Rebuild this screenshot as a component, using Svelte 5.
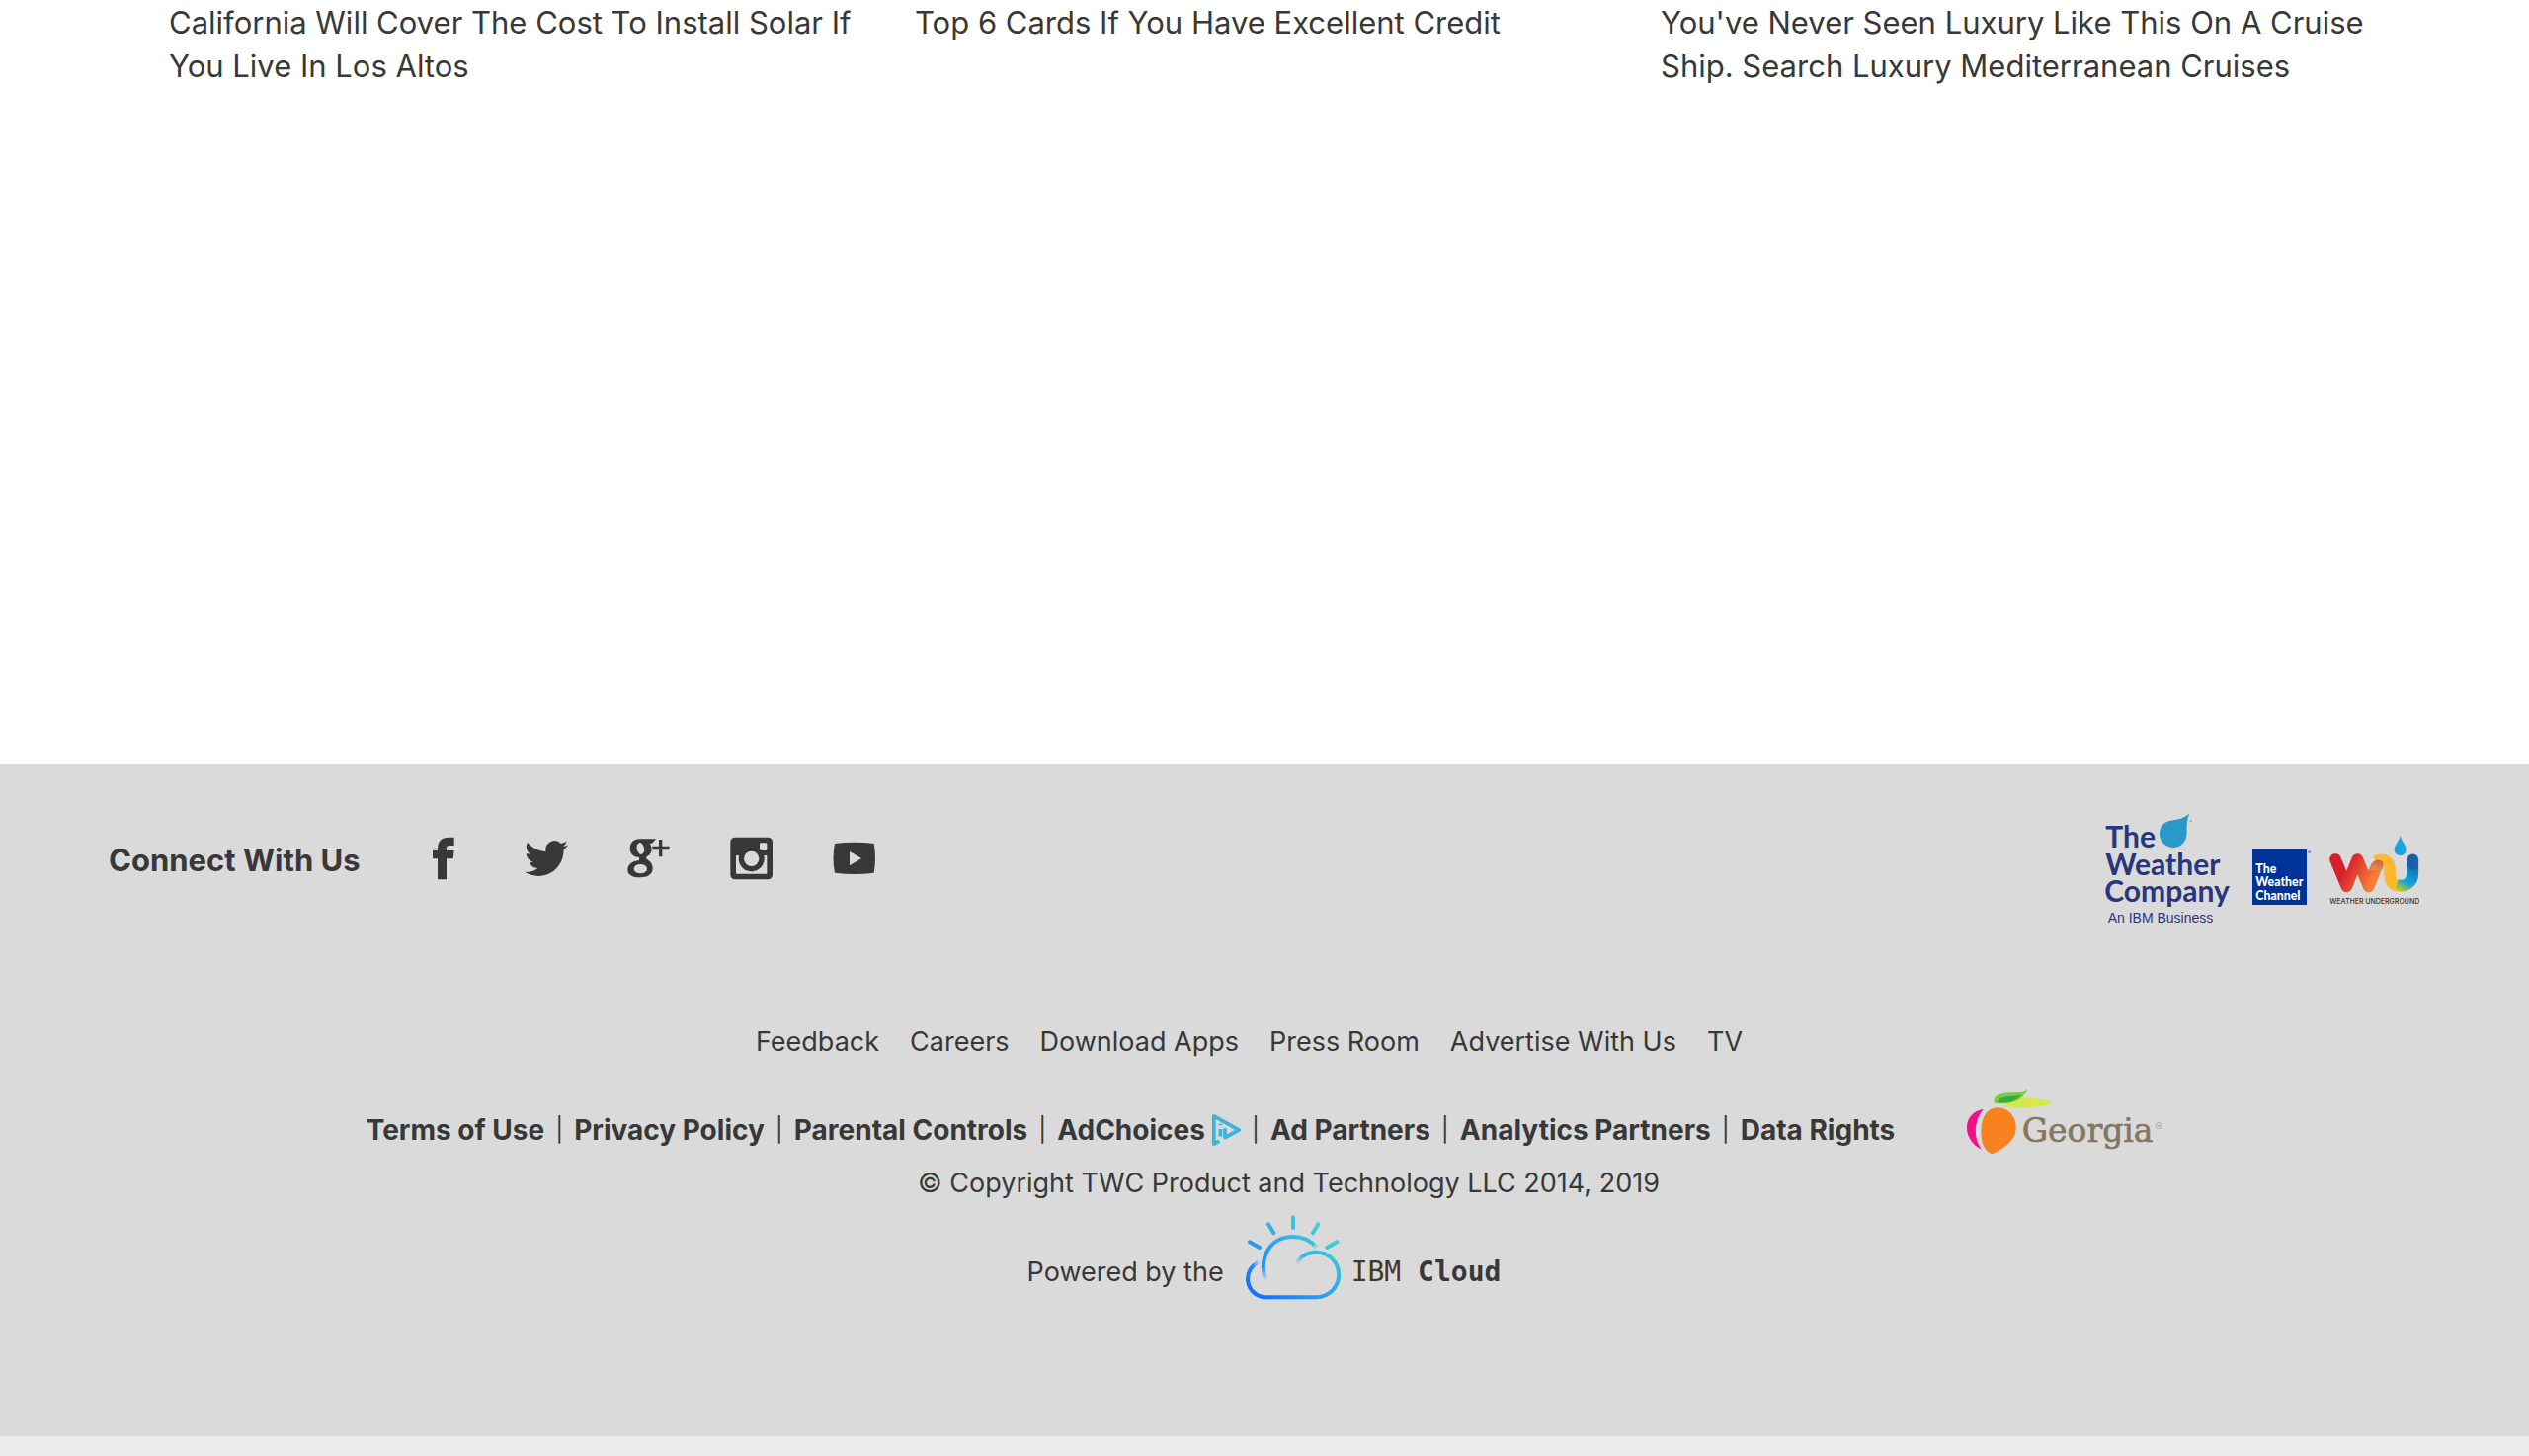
<script>
  const promos = [
    'California Will Cover The Cost To Install Solar If You Live In Los Altos',
    'Top 6 Cards If You Have Excellent Credit',
    "You've Never Seen Luxury Like This On A Cruise Ship. Search Luxury Mediterranean Cruises"
  ];
  const links = ['Feedback', 'Careers', 'Download Apps', 'Press Room', 'Advertise With Us', 'TV'];
  const legal = [
    'Terms of Use',
    'Privacy Policy',
    'Parental Controls',
    'AdChoices',
    'Ad Partners',
    'Analytics Partners',
    'Data Rights'
  ];
</script>

<main class="promos">
  {#each promos as promo}
    <a class="promo" href="#promo">{promo}</a>
  {/each}
</main>

<footer>
  <div class="top">
    <div class="social">
      <h2>Connect With Us</h2>
      <a href="#facebook" aria-label="Facebook">
        <svg viewBox="981 80 132 132"><path d="M1079 82H1064Q1029 82 1029 116V122H1014V147H1029V210H1056V147H1076L1079 122H1056V114Q1056 107 1064 107H1079Z" /></svg>
      </a>
      <a href="#twitter" aria-label="Twitter">
        <svg viewBox="0 0 24 24"><path d="M23.954 4.569a10 10 0 0 1-2.825.775 4.958 4.958 0 0 0 2.163-2.723c-.951.555-2.005.959-3.127 1.184a4.92 4.92 0 0 0-8.384 4.482C7.691 8.094 4.066 6.13 1.64 3.161a4.822 4.822 0 0 0-.666 2.475c0 1.71.87 3.213 2.188 4.096a4.904 4.904 0 0 1-2.228-.616v.061a4.923 4.923 0 0 0 3.946 4.827 4.996 4.996 0 0 1-2.212.085 4.937 4.937 0 0 0 4.604 3.417 9.868 9.868 0 0 1-6.102 2.105c-.39 0-.779-.023-1.17-.067a13.995 13.995 0 0 0 7.557 2.209c9.054 0 13.999-7.496 13.999-13.986 0-.209 0-.42-.015-.63a9.936 9.936 0 0 0 2.46-2.548z" /></svg>
      </a>
      <a href="#google" aria-label="Google Plus">
        <svg viewBox="225 80 132 132">
          <path d="M262 87H312L300 100H293Q299 107 299 118C299 130 291 137 284 141Q280 144 284 148C296 155 302 164 302 177C302 194 288 204 264 204C240 204 226 195 226 181C226 165 240 154 261 152V143C243 142 233 131 233 116C233 98 245 87 262 87Z" />
          <path d="M301 109H321V89H331V109H353V120H331V141H321V120H301Z" />
          <ellipse class="cut" cx="265" cy="116" rx="11" ry="18" transform="rotate(-12 265 116)" />
          <ellipse class="cut" cx="265" cy="178" rx="20" ry="14" />
        </svg>
      </a>
      <a href="#instagram" aria-label="Instagram">
        <svg viewBox="537 80 132 132">
          <rect x="538" y="82" width="128" height="128" rx="14" />
          <rect class="cut" x="627" y="99" width="22" height="23" rx="4" />
          <rect class="cut" x="555" y="137" width="94" height="56" rx="2" />
          <circle cx="602" cy="147" r="39" />
          <circle class="cut" cx="602" cy="147" r="23" />
        </svg>
      </a>
      <a href="#youtube" aria-label="YouTube">
        <svg viewBox="849 80 132 132">
          <path d="M855 101Q915 93 974 101Q982 146 974 190Q915 198 855 190Q846 146 855 101Z" />
          <path class="cut" d="M900 125L936 146L900 168Z" />
        </svg>
      </a>
    </div>

    <div class="brands">
      <a class="company" href="#company" aria-label="The Weather Company">
        <svg viewBox="93 72 381 339">
          <g class="navy lato" font-size="90" font-weight="700">
            <text x="94" y="178">The</text>
            <text x="94" y="260">Weather</text>
            <text x="91" y="343">Company</text>
          </g>
          <text class="navy plain" x="101" y="406" font-size="42">An IBM Business</text>
          <path fill="#2a98cb" d="M349 73C341 91 341 108 341 130C341 160 324 177 300 177C276 177 258 159 258 136C258 113 272 97 300 94C323 91 335 86 349 73Z" />
          <circle cx="353" cy="97" r="3" fill="#999" />
        </svg>
      </a>
      <a class="channel" href="#channel" aria-label="The Weather Channel">
        <svg viewBox="541 179 180 168">
          <rect x="541" y="179" width="165" height="168" fill="#003399" />
          <g class="white lato" font-size="37" font-weight="900">
            <text x="551" y="251">The</text>
            <text x="551" y="291">Weather</text>
            <text x="551" y="331">Channel</text>
          </g>
          <circle cx="714" cy="187" r="4" fill="#7588b8" />
        </svg>
      </a>
      <a class="wu" href="#wunderground" aria-label="Weather Underground">
        <svg viewBox="774 135 273 213">
          <defs>
            <linearGradient id="wu-red" gradientUnits="userSpaceOnUse" x1="800" y1="200" x2="930" y2="270">
              <stop offset="0.25" stop-color="#d8202b" />
              <stop offset="0.85" stop-color="#f57b38" />
            </linearGradient>
            <linearGradient id="wu-blue" gradientUnits="userSpaceOnUse" x1="1027" y1="200" x2="980" y2="305">
              <stop offset="0.1" stop-color="#1660ae" />
              <stop offset="0.7" stop-color="#12a3dc" />
              <stop offset="0.9" stop-color="#8cc63f" />
              <stop offset="1" stop-color="#fdb82f" />
            </linearGradient>
            <linearGradient id="wu-fold" gradientUnits="userSpaceOnUse" x1="925" y1="205" x2="912" y2="250">
              <stop offset="0" stop-color="#b96038" />
              <stop offset="1" stop-color="#f79256" />
            </linearGradient>
          </defs>
          <g fill="none" stroke-width="35" stroke-linecap="round" stroke-linejoin="round">
            <path stroke="url(#wu-red)" d="M792 210L826 292L859 210L893 292L917 232" />
            <path stroke="#fdb82f" stroke-linecap="butt" d="M914 216C940 203 956 216 957 240V256C958 280 970 291 994 291" />
            <path stroke="url(#wu-blue)" stroke-linecap="butt" d="M978 287C1005 296 1027 280 1027 252V225" />
            <path stroke="#1660ae" d="M1027 211V225" />
          </g>
          <path fill="url(#wu-fold)" d="M905 221Q918 203 937 218Q940 232 934 243H898Z" />
          <path fill="#1ba5dc" d="M989 137C993 157 1007 165 1007 181A18 18 0 0 1 971 181C971 165 985 157 989 137Z" />
          <text class="inter" x="775" y="345" font-size="21" font-weight="500" fill="#333">WEATHER UNDERGROUND</text>
        </svg>
      </a>
    </div>
  </div>

  <nav class="links">
    {#each links as link}
      <a href="#link">{link}</a>
    {/each}
  </nav>

  <div class="legal">
    <div class="terms">
      {#each legal as item, i}
        {#if i > 0}<span class="bar">|</span>{/if}
        <a href="#legal">{item}{#if item === 'AdChoices'}<svg viewBox="0 0 32 34"><path d="M9 29L3 32V2L30 17L15 25V15" /><path d="M10 10V12M10 16V24" /></svg>{/if}</a>
      {/each}
    </div>
    <a class="georgia" href="#georgia" aria-label="Georgia">
      <svg viewBox="36 36 597 201">
        <path fill="#f5108a" d="M86 98C22 110 18 188 80 221C52 180 60 132 86 98Z" />
        <path fill="#f98220" d="M128 94C165 94 188 124 185 160C182 198 142 222 112 235C92 228 78 205 79 165C80 122 98 94 128 94Z" />
        <path fill="#d6e84c" d="M145 90C190 56 230 62 302 77C262 94 190 100 145 90Z" />
        <path fill="#7ccb3f" d="M120 80C110 52 150 50 180 48Q205 46 219 38C210 70 170 88 120 80Z" />
        <path fill="#36aa48" d="M128 78C135 58 165 62 202 56C185 74 160 84 128 78Z" />
        <text x="203" y="198" font-size="99" font-family="'DejaVu Serif', serif" fill="#857661" stroke="#857661" stroke-width="2">Georgia</text>
        <circle cx="619" cy="149" r="9" fill="none" stroke="#b5aca0" stroke-width="3" />
        <circle cx="619" cy="149" r="3" fill="#a0958a" />
      </svg>
    </a>
  </div>

  <p class="copyright">© Copyright TWC Product and Technology LLC 2014, 2019</p>

  <a class="powered" href="#cloud">
    <span>Powered by the</span>
    <svg viewBox="726 60 288 258">
      <defs>
        <linearGradient id="sky" gradientUnits="userSpaceOnUse" x1="770" y1="310" x2="960" y2="90">
          <stop offset="0" stop-color="#1570ff" />
          <stop offset="0.5" stop-color="#2ea5ee" />
          <stop offset="1" stop-color="#42d4d4" />
        </linearGradient>
        <radialGradient id="fade">
          <stop offset="0.1" stop-color="#000" />
          <stop offset="1" stop-color="#000" stop-opacity="0" />
        </radialGradient>
        <mask id="sun-mask" maskUnits="userSpaceOnUse" x="700" y="40" width="340" height="300">
          <rect x="700" y="40" width="340" height="300" fill="#fff" />
          <circle cx="790" cy="264" r="48" fill="url(#fade)" />
          <circle cx="944" cy="161" r="20" fill="url(#fade)" />
        </mask>
        <mask id="cloud-mask" maskUnits="userSpaceOnUse" x="700" y="40" width="340" height="300">
          <rect x="700" y="40" width="340" height="300" fill="#fff" />
          <circle cx="877" cy="213" r="40" fill="url(#fade)" />
          <circle cx="770" cy="200" r="28" fill="url(#fade)" />
        </mask>
      </defs>
      <g fill="none" stroke="url(#sky)" stroke-width="12">
        <g stroke-linecap="round">
          <path d="M870.1 67L870 99M795 88L811 115M946 88L930 115M738 142L768 159M1003 142L973 159" />
        </g>
        <path mask="url(#sun-mask)" d="M788 262C762 190 800 126 870 126C900 126 924 138 942 159" />
        <path mask="url(#cloud-mask)" d="M878 212C890 186 914 173 940 173A68 68 0 0 1 940 310H788A56 56 0 0 1 770 201" />
      </g>
    </svg>
    <span class="ibm">IBM <b>Cloud</b></span>
  </a>
</footer>

<style>
  :global(body) {
    margin: 0;
    background: #ececec;
  }
  :global(#app) {
    font-family: Inter, 'Liberation Sans', sans-serif;
    color: #383838;
  }
  a {
    color: inherit;
    text-decoration: none;
  }
  svg {
    display: block;
  }
  .promos {
    display: grid;
    grid-template-columns: repeat(3, 1fr);
    padding: 1px 124px 684px 171px;
    background: #fff;
  }
  .promo {
    padding-right: 32px;
    font-size: 31px;
    line-height: 44px;
  }
  footer {
    padding: 50px 111px 138px 110px;
    background: #dadada;
    font-size: 27px;
    line-height: 40px;
  }
  .top {
    display: flex;
    justify-content: space-between;
    align-items: flex-start;
  }
  .social {
    display: flex;
    align-items: center;
    gap: 60px;
    padding-top: 22px;
  }
  .social h2 {
    margin: 0;
    padding: 4px 2px 0 0;
    font-size: 31px;
    font-weight: 700;
    line-height: 44px;
  }
  .social svg {
    width: 44px;
    height: 44px;
    fill: #383838;
  }
  .social .cut {
    fill: #dadada;
  }
  .brands {
    display: flex;
    align-items: flex-end;
  }
  .company svg {
    width: 127px;
    height: 113px;
  }
  .channel svg {
    width: 60px;
    height: 56px;
  }
  .wu svg {
    width: 91px;
    height: 71px;
  }
  .channel {
    margin: 0 18px 20px 22px;
  }
  .wu {
    margin-bottom: 20px;
  }
  .navy {
    fill: #28367e;
  }
  .white {
    fill: #fff;
  }
  .lato {
    font-family: Lato, sans-serif;
  }
  .plain {
    font-family: 'Liberation Sans', sans-serif;
  }
  .inter {
    font-family: Inter, sans-serif;
  }
  .links {
    display: flex;
    justify-content: center;
    gap: 31px;
    margin-top: 99px;
    padding-right: 30px;
  }
  .legal {
    display: flex;
    justify-content: center;
    align-items: center;
    gap: 73px;
    margin-top: 27px;
    padding-left: 2px;
  }
  .terms {
    display: flex;
    gap: 11px;
    padding-top: 16px;
    font-size: 28px;
    font-weight: 700;
  }
  .terms a {
    display: flex;
    align-items: center;
    gap: 6px;
  }
  .bar {
    font-size: 24px;
    font-weight: 400;
  }
  .terms svg {
    width: 30px;
    height: 32px;
    fill: none;
    stroke: #3fb3d6;
    stroke-width: 4;
    stroke-linejoin: round;
  }
  .georgia svg {
    width: 199px;
    height: 67px;
  }
  .copyright {
    margin: 9px 0 0;
    padding-left: 50px;
    text-align: center;
  }
  .powered {
    display: flex;
    justify-content: center;
    align-items: flex-end;
    margin-top: 12px;
  }
  .powered span {
    margin-bottom: 8px;
  }
  .powered svg {
    width: 96px;
    height: 86px;
    margin: 0 11px 0 22px;
  }
  .powered .ibm {
    font-family: 'DejaVu Sans Mono', monospace;
    font-size: 28px;
  }
</style>
